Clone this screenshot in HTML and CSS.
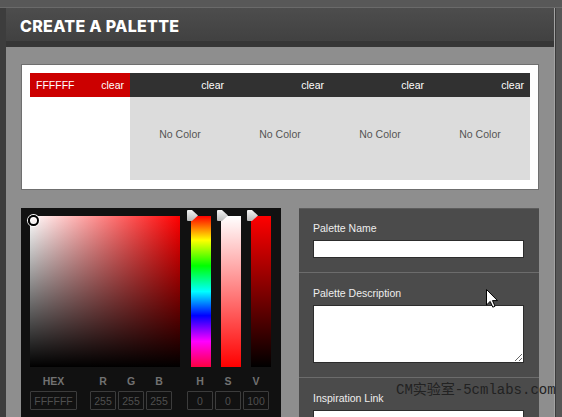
FILE: index.html
```html
<!DOCTYPE html>
<html>
<head>
<meta charset="utf-8">
<title>Create a Palette</title>
<link rel="stylesheet" href="styles.css">
</head>
<body>
<div class="topband"></div>
<div class="frame">
  <div class="lstrip"></div>
  <div class="main">
    <div class="header"><h1>CREATE A PALETTE</h1></div>
    <div class="content">
      <div class="palette-box">
        <div class="palette">
          <div class="slot">
            <div class="slot-bar active"><span>FFFFFF</span><span>clear</span></div>
            <div class="slot-color white"></div>
          </div>
          <div class="slot">
            <div class="slot-bar"><span></span><span>clear</span></div>
            <div class="slot-color">No Color</div>
          </div>
          <div class="slot">
            <div class="slot-bar"><span></span><span>clear</span></div>
            <div class="slot-color">No Color</div>
          </div>
          <div class="slot">
            <div class="slot-bar"><span></span><span>clear</span></div>
            <div class="slot-color">No Color</div>
          </div>
          <div class="slot">
            <div class="slot-bar"><span></span><span>clear</span></div>
            <div class="slot-color">No Color</div>
          </div>
        </div>
      </div>
      <div class="lower">
        <div class="picker">
          <div class="picker-top">
            <div class="sv"><span class="sv-marker"></span></div>
            <div class="bar hue">
              <svg class="handle" viewBox="0 0 11 11"><defs><linearGradient id="hg" x1="0" y1="0" x2="0" y2="1"><stop offset="0" stop-color="#f4f4f4"/><stop offset="1" stop-color="#b9b9b9"/></linearGradient></defs><path d="M1 0 H5 L11 5.5 L5 11 H1 Q0 11 0 10 V1 Q0 0 1 0 Z" fill="url(#hg)"/></svg>
            </div>
            <div class="bar sat">
              <svg class="handle" viewBox="0 0 11 11"><path d="M1 0 H5 L11 5.5 L5 11 H1 Q0 11 0 10 V1 Q0 0 1 0 Z" fill="url(#hg)"/></svg>
            </div>
            <div class="bar val">
              <svg class="handle" viewBox="0 0 11 11"><path d="M1 0 H5 L11 5.5 L5 11 H1 Q0 11 0 10 V1 Q0 0 1 0 Z" fill="url(#hg)"/></svg>
            </div>
          </div>
          <div class="fields">
            <div class="field f-hex"><span class="f-label">HEX</span><input class="f-input" value="FFFFFF"></div>
            <div class="group g-rgb">
              <div class="field"><span class="f-label">R</span><input class="f-input" value="255"></div>
              <div class="field"><span class="f-label">G</span><input class="f-input" value="255"></div>
              <div class="field"><span class="f-label">B</span><input class="f-input" value="255"></div>
            </div>
            <div class="group g-hsv">
              <div class="field"><span class="f-label">H</span><input class="f-input" value="0"></div>
              <div class="field"><span class="f-label">S</span><input class="f-input" value="0"></div>
              <div class="field"><span class="f-label">V</span><input class="f-input" value="100"></div>
            </div>
          </div>
        </div>
        <form class="details">
          <div class="section">
            <label class="d-label">Palette Name</label>
            <input class="d-input" type="text">
          </div>
          <div class="section sep">
            <label class="d-label">Palette Description</label>
            <textarea class="d-text"></textarea>
          </div>
          <div class="section sep">
            <label class="d-label">Inspiration Link</label>
            <input class="d-input" type="text">
          </div>
        </form>
      </div>
    </div>
  </div>
  <div class="redge"></div>
</div>
<div class="watermark">CM实验室-5cmlabs.com</div>
<svg class="cursor" viewBox="0 0 12 19" width="12" height="19"><path d="M0.5 0.5 V16 L4.2 12.4 L6.8 18.2 L9 17.2 L6.5 11.6 H11.5 Z" fill="#fff" stroke="#000" stroke-width="1"/></svg>
</body>
</html>
```
FILE: styles.css
```css
html, body {
  margin: 0;
  padding: 0;
}
body {
  width: 562px;
  height: 417px;
  overflow: hidden;
  background: #575757;
  font-family: "Liberation Sans", Arial, sans-serif;
  position: relative;
}
.topband {
  height: 7px;
  background: #585858;
  border-bottom: 1px solid #6a6a6a;
}
.frame {
  display: flex;
  height: 409px;
  overflow: hidden;
}
.lstrip {
  width: 6px;
  background: #3d3d3d;
}
.main {
  width: 548px;
  display: flex;
  flex-direction: column;
  overflow: hidden;
}
.redge {
  width: 8px;
  background: linear-gradient(to right, #a3a3a3 0 1px, #3b3b3b 1px 2px, #565656 2px);
}
.header {
  height: 39px;
  padding-top: 4px;
  box-sizing: border-box;
  background: linear-gradient(#4d4d4d, #414141);
  border-bottom: 6px solid #363636;
}
.header h1 {
  margin: 0;
  padding-left: 14px;
  font-family: Inter, "Open Sans", sans-serif;
  font-weight: 800;
  font-size: 16px;
  line-height: 29px;
  color: #fff;
  letter-spacing: 0.3px;
}
.content {
  flex: 1;
  min-height: 0;
  overflow: hidden;
  background: #8e8e8e;
  padding: 17px 15px 0;
}
.palette-box {
  background: #fff;
  border: 1px solid #6f6f6f;
  padding: 8px 8px 9px;
}
.palette {
  display: flex;
}
.slot {
  width: 100px;
}
.slot-bar {
  height: 24px;
  background: #313131;
  display: flex;
  justify-content: space-between;
  align-items: center;
  padding: 0 6px 1px;
  box-sizing: border-box;
  color: #fff;
  font-size: 10.5px;
}
.slot-bar.active {
  background: #cc0000;
}
.slot-color {
  height: 83px;
  box-sizing: border-box;
  padding-top: 31px;
  background: #dcdcdc;
  text-align: center;
  color: #555;
  font-size: 10.5px;
  line-height: 13px;
}
.slot-color.white {
  background: #fff;
}
.lower {
  display: flex;
  gap: 18px;
  margin-top: 18px;
  align-items: flex-start;
}
.picker {
  width: 260px;
  height: 209px;
  box-sizing: border-box;
  background: #111;
  padding: 8px 10px 0 9px;
}
.picker-top {
  display: flex;
  gap: 10px;
}
.sv {
  width: 150px;
  height: 151px;
  margin-right: 1px;
  position: relative;
  background: linear-gradient(to top, #000, rgba(0,0,0,0)), linear-gradient(to right, #fff, #f00);
}
.sv-marker {
  position: absolute;
  left: -2px;
  top: -1px;
  width: 7px;
  height: 7px;
  border: 2px solid #000;
  border-radius: 50%;
  box-shadow: 0 0 0 1px #fff, inset 0 0 0 1px #fff;
}
.bar {
  width: 20px;
  height: 151px;
  position: relative;
}
.hue {
  background: linear-gradient(#f00 0%, #ff0 16%, #0f0 33%, #0ff 50%, #00f 66%, #f0f 83%, #ff0040 100%);
}
.sat {
  background: linear-gradient(#fff, #f00);
}
.val {
  background: linear-gradient(#f00, #000);
}
.handle {
  position: absolute;
  left: -4px;
  top: -6px;
  width: 11px;
  height: 11px;
}
.fields {
  display: flex;
  margin-top: 8px;
}
.group {
  display: flex;
  gap: 2px;
}
.g-rgb {
  margin-left: 13px;
}
.g-hsv {
  margin-left: 15px;
}
.field {
  width: 26px;
  display: flex;
  flex-direction: column;
  align-items: center;
}
.f-hex {
  width: 47px;
}
.f-label {
  font-weight: bold;
  font-size: 10.5px;
  line-height: 13px;
  color: #727272;
}
.f-input {
  margin-top: 3px;
  width: 100%;
  height: 19px;
  box-sizing: border-box;
  padding: 0;
  background: #111;
  border: 1px solid #3c3c3c;
  border-radius: 1px;
  color: #4f4f4f;
  font-family: "Liberation Sans", Arial, sans-serif;
  font-size: 10.5px;
  text-align: center;
  outline: none;
}
.details {
  width: 240px;
  height: 209px;
  overflow: hidden;
  margin: 0;
  background: #4b4b4b;
  box-shadow: inset 0 1px #5c5c5c;
}
.section {
  padding: 14px 15px 14px 14px;
}
.section.sep {
  border-top: 1px solid #6c6c6c;
}
.d-label {
  display: block;
  font-size: 10.5px;
  line-height: 13px;
  color: #eee;
  margin-bottom: 5px;
}
.d-input {
  display: block;
  width: 211px;
  height: 18px;
  box-sizing: border-box;
  margin: 0;
  border: 1px solid #2c2c2c;
  background: #fff;
}
.d-text {
  display: block;
  width: 211px;
  height: 58px;
  box-sizing: border-box;
  margin: 0;
  border: 1px solid #2c2c2c;
  background: #fff;
}
.watermark {
  position: absolute;
  left: 396px;
  top: 381px;
  font-family: "Liberation Mono", "Noto Sans CJK SC", monospace;
  font-size: 14px;
  line-height: 18px;
  color: #222;
  white-space: nowrap;
}
.cursor {
  position: absolute;
  left: 486px;
  top: 289px;
}
```
